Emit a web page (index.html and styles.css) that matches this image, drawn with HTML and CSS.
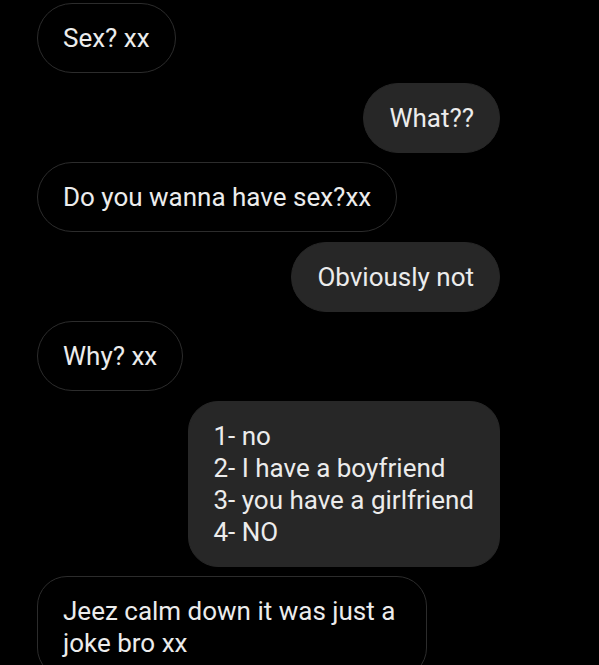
FILE: index.html
```html
<!DOCTYPE html>
<html lang="en">
<head>
    <meta charset="UTF-8">
    <meta name="viewport" content="width=device-width, initial-scale=1.0">
    <title>Chat</title>
    <link rel="stylesheet" href="styles.css">
</head>
<body>
<ul class="chat">
    <li class="msg in">Sex? xx</li>
    <li class="msg out">What??</li>
    <li class="msg in">Do you wanna have sex?xx</li>
    <li class="msg out">Obviously not</li>
    <li class="msg in">Why? xx</li>
    <li class="msg out block">1- no<br>2- I have a boyfriend<br>3- you have a girlfriend<br>4- NO</li>
    <li class="msg in block">Jeez calm down it was just a joke bro xx</li>
</ul>
</body>
</html>
```

FILE: styles.css
```css
html, body {
    margin: 0;
    height: 100%;
    background: #000;
}
body {
    overflow: hidden;
    font-family: Roboto, "Liberation Sans", sans-serif;
}
.chat {
    margin: 0;
    padding: 3px 99px 0 37px;
    list-style: none;
    display: flex;
    flex-direction: column;
    align-items: flex-start;
    gap: 9.5px;
}
.msg {
    max-width: 390px;
    box-sizing: border-box;
    padding: 18px 25px;
    border: 1px solid #2c2c2c;
    border-radius: 35px;
    color: #ececec;
    font-size: 26px;
    line-height: 32px;
}
.in {
    background: #000;
}
.out {
    align-self: flex-end;
    background: #272727;
    border-color: #272727;
}
.block {
    border-radius: 30px;
}
.out.block {
    padding-left: 24px;
}
```
